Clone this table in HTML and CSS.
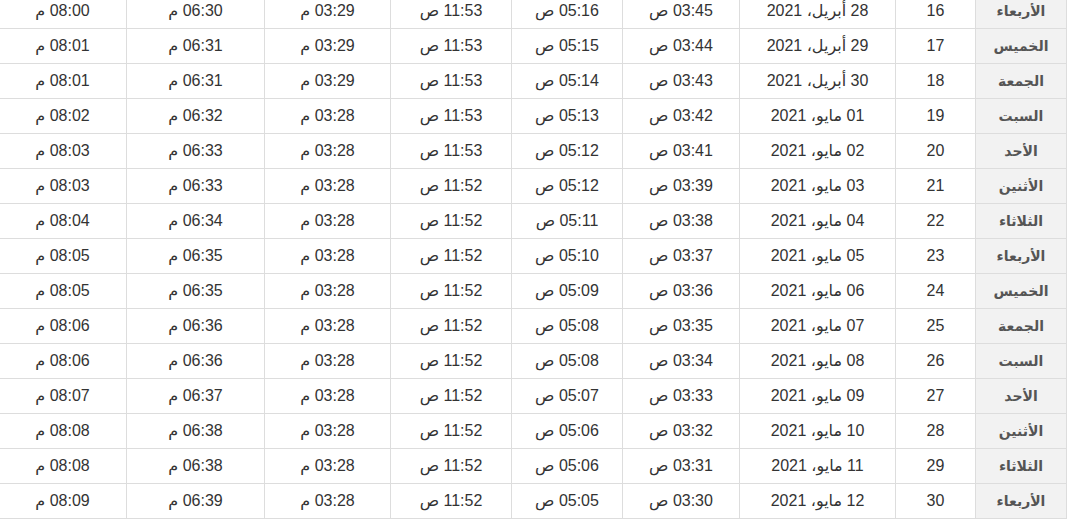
FILE: index.html
```html
<!DOCTYPE html>
<html lang="ar" dir="rtl">
<head>
    <meta charset="UTF-8">
    <meta name="viewport" content="width=device-width, initial-scale=1.0">
    <title>مواقيت الصلاة</title>
    <link rel="stylesheet" href="styles.css">
</head>
<body>
    <main class="wrap">
        <table class="times">
            <colgroup>
                <col class="c-day">
                <col class="c-num">
                <col class="c-date">
                <col class="c-fajr">
                <col class="c-sun">
                <col class="c-dhuhr">
                <col class="c-asr">
                <col class="c-maghrib">
                <col class="c-isha">
            </colgroup>
            <tbody>
                <tr><td class="day">الأربعاء</td><td>16</td><td>28 أبريل، 2021</td><td>03:45 ص</td><td>05:16 ص</td><td>11:53 ص</td><td>03:29 م</td><td>06:30 م</td><td>08:00 م</td></tr>
                <tr><td class="day">الخميس</td><td>17</td><td>29 أبريل، 2021</td><td>03:44 ص</td><td>05:15 ص</td><td>11:53 ص</td><td>03:29 م</td><td>06:31 م</td><td>08:01 م</td></tr>
                <tr><td class="day">الجمعة</td><td>18</td><td>30 أبريل، 2021</td><td>03:43 ص</td><td>05:14 ص</td><td>11:53 ص</td><td>03:29 م</td><td>06:31 م</td><td>08:01 م</td></tr>
                <tr><td class="day">السبت</td><td>19</td><td>01 مايو، 2021</td><td>03:42 ص</td><td>05:13 ص</td><td>11:53 ص</td><td>03:28 م</td><td>06:32 م</td><td>08:02 م</td></tr>
                <tr><td class="day">الأحد</td><td>20</td><td>02 مايو، 2021</td><td>03:41 ص</td><td>05:12 ص</td><td>11:53 ص</td><td>03:28 م</td><td>06:33 م</td><td>08:03 م</td></tr>
                <tr><td class="day">الأثنين</td><td>21</td><td>03 مايو، 2021</td><td>03:39 ص</td><td>05:12 ص</td><td>11:52 ص</td><td>03:28 م</td><td>06:33 م</td><td>08:03 م</td></tr>
                <tr><td class="day">الثلاثاء</td><td>22</td><td>04 مايو، 2021</td><td>03:38 ص</td><td>05:11 ص</td><td>11:52 ص</td><td>03:28 م</td><td>06:34 م</td><td>08:04 م</td></tr>
                <tr><td class="day">الأربعاء</td><td>23</td><td>05 مايو، 2021</td><td>03:37 ص</td><td>05:10 ص</td><td>11:52 ص</td><td>03:28 م</td><td>06:35 م</td><td>08:05 م</td></tr>
                <tr><td class="day">الخميس</td><td>24</td><td>06 مايو، 2021</td><td>03:36 ص</td><td>05:09 ص</td><td>11:52 ص</td><td>03:28 م</td><td>06:35 م</td><td>08:05 م</td></tr>
                <tr><td class="day">الجمعة</td><td>25</td><td>07 مايو، 2021</td><td>03:35 ص</td><td>05:08 ص</td><td>11:52 ص</td><td>03:28 م</td><td>06:36 م</td><td>08:06 م</td></tr>
                <tr><td class="day">السبت</td><td>26</td><td>08 مايو، 2021</td><td>03:34 ص</td><td>05:08 ص</td><td>11:52 ص</td><td>03:28 م</td><td>06:36 م</td><td>08:06 م</td></tr>
                <tr><td class="day">الأحد</td><td>27</td><td>09 مايو، 2021</td><td>03:33 ص</td><td>05:07 ص</td><td>11:52 ص</td><td>03:28 م</td><td>06:37 م</td><td>08:07 م</td></tr>
                <tr><td class="day">الأثنين</td><td>28</td><td>10 مايو، 2021</td><td>03:32 ص</td><td>05:06 ص</td><td>11:52 ص</td><td>03:28 م</td><td>06:38 م</td><td>08:08 م</td></tr>
                <tr><td class="day">الثلاثاء</td><td>29</td><td>11 مايو، 2021</td><td>03:31 ص</td><td>05:06 ص</td><td>11:52 ص</td><td>03:28 م</td><td>06:38 م</td><td>08:08 م</td></tr>
                <tr><td class="day">الأربعاء</td><td>30</td><td>12 مايو، 2021</td><td>03:30 ص</td><td>05:05 ص</td><td>11:52 ص</td><td>03:28 م</td><td>06:39 م</td><td>08:09 م</td></tr>
            </tbody>
        </table>
    </main>
</body>
</html>
```

FILE: styles.css
```css
body {
    margin: 0;
    padding: 0;
    background-color: #fff;
    font-family: "Liberation Sans", "DejaVu Sans", sans-serif;
    color: #333;
    overflow: hidden;
}

.wrap {
    width: 1082px;
    margin-top: -7px;
}

.times {
    width: 1068px;
    margin-right: 15px;
    border-collapse: collapse;
    table-layout: fixed;
}

.c-day { width: 91px; }
.c-num { width: 80px; }
.c-date { width: 156px; }
.c-fajr { width: 117px; }
.c-sun { width: 111px; }
.c-dhuhr { width: 121px; }
.c-asr { width: 126px; }
.c-maghrib { width: 138px; }
.c-isha { width: 128px; }

.times td {
    border: 1px solid #ddd;
    padding: 8px 0;
    height: 18px;
    line-height: 18px;
    font-size: 16px;
    text-align: center;
    white-space: nowrap;
}

.times td.day {
    background-color: #f2f2f2;
    color: #555;
    font-weight: bold;
    font-size: 14px;
}
```
